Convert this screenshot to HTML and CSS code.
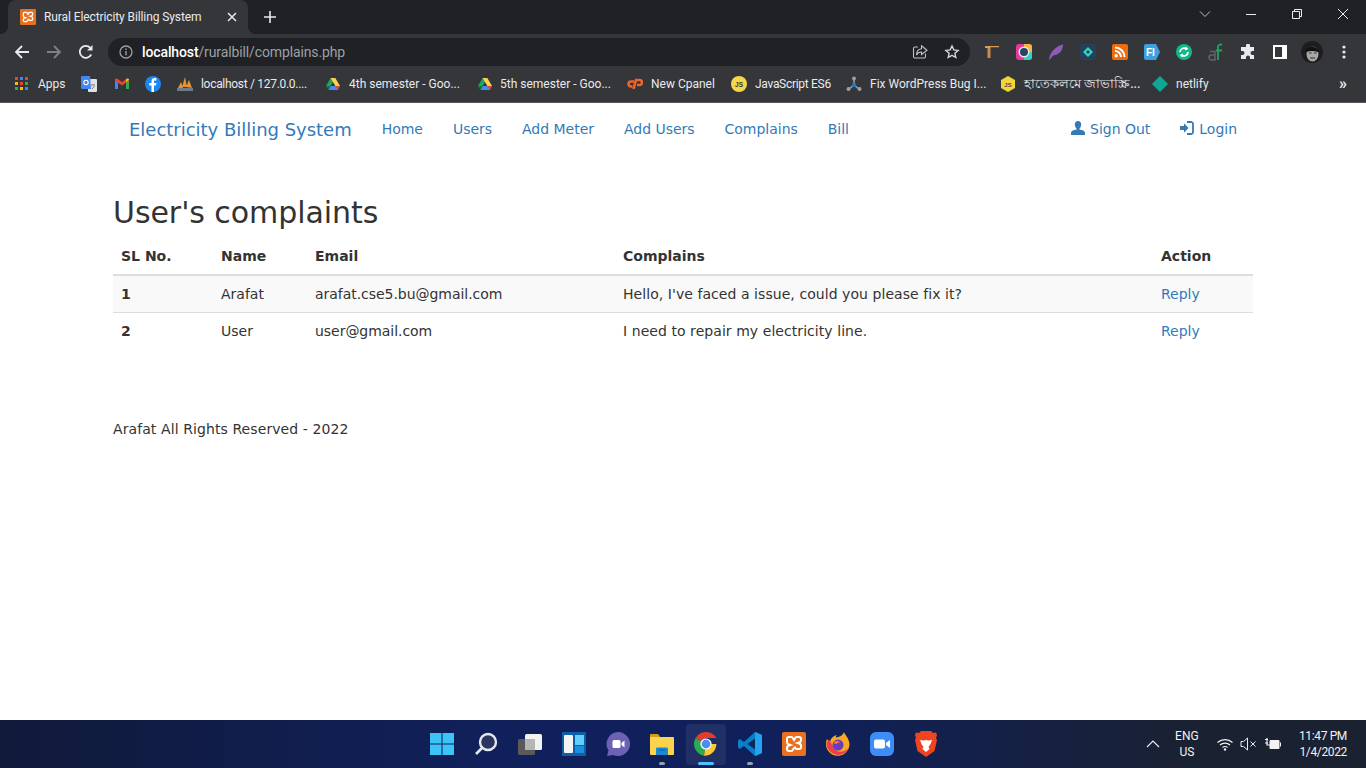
FILE: index.html
```html
<!DOCTYPE html>
<html lang="en">
<head>
  <meta charset="UTF-8" />
  <title>Rural Electricity Billing System</title>
  <link rel="stylesheet" href="styles.css">
</head>
<body>
  <svg class="defs" width="0" height="0">
    <symbol id="xampp" viewBox="0 0 24 24">
      <rect width="24" height="24" rx="2" fill="#e8701f"/>
      <path d="M7 5h2.500q1 0 1.500 1.500L12 8l1-1.500q.5-1.500 1.500-1.500H17q2 0 2 2v1q0 2-2 2.500l-1.500.5 1.500.5q2 .5 2 2.500v1q0 2-2 2h-2.500q-1 0-1.500-1.500L12 16l-1 1.500q-.5 1.500-1.500 1.500H7q-2 0-2-2v-1q0-2 2-2.500l1.500-.5-1.500-.5q-2-.5-2-2.500V7q0-2 2-2z" fill="none" stroke="#fff" stroke-width="2"/>
    </symbol>
    <symbol id="drive" viewBox="0 0 24 24">
      <path d="M8.500 3h7l-7 12H1.500z" fill="#1fa463"/>
      <path d="M15.500 3l7 12h-7l-7-12z" fill="#ffd04b"/>
      <path d="M5 21l3.500-6h14L19 21z" fill="#4688f4"/>
      <path d="M1.500 15h7L5 21z" fill="#0f7b45"/>
      <path d="M15.500 15h7L19 21z" fill="#e8442e"/>
    </symbol>
  </svg>

  <header class="chrome">
    <div class="tabstrip">
      <div class="tab">
        <svg class="fav" width="16" height="16"><use href="#xampp"/></svg>
        <span class="tab-title">Rural Electricity Billing System</span>
        <svg class="tab-close" width="10" height="10" viewBox="0 0 10 10"><path d="M1 1l8 8M9 1l-8 8" stroke="#e8eaed" stroke-width="1.500"/></svg>
      </div>
      <svg class="tab-new" width="14" height="14" viewBox="0 0 14 14"><path d="M7 1v12M1 7h12" stroke="#e8eaed" stroke-width="1.600"/></svg>
      <div class="winctl">
        <span><svg width="12" height="12" viewBox="0 0 12 12"><path d="M1 3.500l5 5 5-5" fill="none" stroke="#bdbfc3"/></svg></span>
        <span><svg width="10" height="10" viewBox="0 0 10 10"><path d="M0 5.500h10" stroke="#e8eaed"/></svg></span>
        <span><svg width="12" height="12" viewBox="0 0 12 12"><path d="M1.500 3.500h7v7h-7zM3.500 3.500v-2h7v7h-2" fill="none" stroke="#e8eaed"/></svg></span>
        <span><svg width="12" height="12" viewBox="0 0 12 12"><path d="M1 1l10 10M11 1L1 11" stroke="#e8eaed"/></svg></span>
      </div>
    </div>

    <div class="toolbar">
      <button class="tb"><svg width="16" height="16" viewBox="0 0 16 16"><path d="M15 8H2M8 2L2 8l6 6" fill="none" stroke="#e8eaed" stroke-width="1.800"/></svg></button>
      <button class="tb"><svg width="16" height="16" viewBox="0 0 16 16"><path d="M1 8h13M8 2l6 6-6 6" fill="none" stroke="#7d8084" stroke-width="1.800"/></svg></button>
      <button class="tb"><svg width="16" height="16" viewBox="0 0 16 16"><path d="M13.200 10.500A6 6 0 1 1 12.300 3.800" fill="none" stroke="#e8eaed" stroke-width="1.800"/><path d="M14.500 1v5.500H9z" fill="#e8eaed"/></svg></button>
      <div class="omnibox">
        <svg width="14" height="14" viewBox="0 0 14 14"><circle cx="7" cy="7" r="6" fill="none" stroke="#9aa0a6" stroke-width="1.300"/><path d="M7 6v4.200M7 3.500v1.400" stroke="#9aa0a6" stroke-width="1.400"/></svg>
        <span class="url"><b>localhost</b>/ruralbill/complains.php</span>
        <svg class="omni-share" width="16" height="16" viewBox="0 0 16 16"><path d="M13.500 9.500v3a1.500 1.500 0 0 1-1.500 1.500H3a1.500 1.500 0 0 1-1.500-1.500v-8A1.500 1.500 0 0 1 3 3h3" fill="none" stroke="#bdc1c6" stroke-width="1.100"/><path d="M9.500 1.800L15 6.200l-5.500 4.300V8C7 8 5.500 9 4.500 11c0-3.500 2-6 5-6.300z" fill="none" stroke="#bdc1c6" stroke-width="1.100"/></svg>
        <svg width="16" height="16" viewBox="0 0 16 16"><path d="M8 2l1.800 3.900 4.300.5-3.200 2.900.9 4.200L8 11.400l-3.800 2.100.9-4.200-3.200-2.900 4.300-.5z" fill="none" stroke="#d5d7da" stroke-width="1.400"/></svg>
      </div>
      <div class="exts">
        <span><svg width="16" height="16" viewBox="0 0 16 16"><path d="M1 2h3v2H1zM4 2h11v1.200H6.500V4H4z" fill="#d99a5b"/><path d="M3.500 4h3v10h-3z" fill="#c98a4e"/></svg></span>
        <span><svg width="16" height="16" viewBox="0 0 16 16"><rect width="16" height="16" rx="3" fill="#e6399b"/><path d="M8 0h5a3 3 0 0 1 3 3v5H8z" fill="#f6b73c"/><path d="M8 16h5a3 3 0 0 0 3-3V8H8z" fill="#2bd4c0"/><circle cx="8" cy="8" r="5.500" fill="#e8eaed"/><circle cx="8" cy="8" r="4" fill="#2b4560"/></svg></span>
        <span><svg width="16" height="16" viewBox="0 0 16 16"><path d="M1 15.500C2 8 8 2 15 .5c0 5-3 10.500-10 11l-3 4z" fill="#8d5cb8"/></svg></span>
        <span><svg width="16" height="16" viewBox="0 0 16 16"><rect width="16" height="16" rx="2" fill="#24405a"/><path d="M8 3l5 5-5 5-5-5zM8 6L6 8l2 2 2-2z" fill="#2fd8c4" fill-rule="evenodd"/></svg></span>
        <span><svg width="16" height="16" viewBox="0 0 16 16"><rect width="16" height="16" rx="2" fill="#ee6c0d"/><circle cx="4.200" cy="11.800" r="1.700" fill="#fff"/><path d="M3 7a6 6 0 0 1 6 6M3 3.500A9.500 9.500 0 0 1 12.500 13" fill="none" stroke="#fff" stroke-width="2"/></svg></span>
        <span><svg width="16" height="16" viewBox="0 0 16 16"><path d="M0 2a2 2 0 0 1 2-2h10l4 8-4 8H2a2 2 0 0 1-2-2z" fill="#3f9fe0"/><text x="2" y="12" font-size="10" font-weight="700" font-family="Liberation Sans" fill="#fff">FI</text></svg></span>
        <span><svg width="16" height="16" viewBox="0 0 16 16"><circle cx="8" cy="8" r="8" fill="#12b886"/><path d="M4 8a4 4 0 0 1 6.500-3M12 8a4 4 0 0 1-6.500 3" fill="none" stroke="#fff" stroke-width="1.800"/><path d="M9.500 2.500l3 2.500-3.500 1.500zM6.500 13.500l-3-2.500 3.500-1.500z" fill="#fff"/></svg></span>
        <span><svg width="16" height="18" viewBox="0 0 16 18"><path d="M7 17H3.500a2.500 2.500 0 0 1 0-5H7v5zM2 8.500h5V17" fill="none" stroke="#5f6368" stroke-width="1.500"/><path d="M10 17V4a2.500 2.500 0 0 1 4-2M8 7.500h6" fill="none" stroke="#1fa463" stroke-width="1.800"/></svg></span>
        <span><svg width="16" height="16" viewBox="0 0 16 16"><path d="M6 1.500a2 2 0 0 1 4 0V3h4v4h-1.500a2 2 0 0 0 0 4H14v4H10v-1.500a2 2 0 0 0-4 0V15H1v-4h1.500a2 2 0 0 0 0-4H1V3h5z" fill="#e8eaed"/></svg></span>
        <span><svg width="14" height="14" viewBox="0 0 14 14"><path d="M0 0h14v14H0zM9 2H2v10h7z" fill="#fff" fill-rule="evenodd"/></svg></span>
        <span class="avatar"><svg width="22" height="22" viewBox="0 0 22 22"><circle cx="11" cy="11" r="11" fill="#1d1d1d"/><ellipse cx="11.500" cy="13" rx="6" ry="7.500" fill="#a8a8a8"/><path d="M4 10q7-9 14 0l-1 1q-6-2-12 0z" fill="#111"/><path d="M8 12h2.500M13 12h2.500M9 17h5" stroke="#333" stroke-width="1"/></svg></span>
        <span><svg width="4" height="14" viewBox="0 0 4 14"><circle cx="2" cy="2" r="1.600" fill="#e8eaed"/><circle cx="2" cy="7" r="1.600" fill="#e8eaed"/><circle cx="2" cy="12" r="1.600" fill="#e8eaed"/></svg></span>
      </div>
    </div>

    <div class="bookmarks">
      <a class="bm"><svg width="13" height="14" viewBox="0 0 13 14"><path d="M0 0h3v3H0z" fill="#ea4335"/><path d="M5 0h3v3H5z" fill="#4285f4"/><path d="M10 0h3v3h-3z" fill="#ea4335"/><path d="M0 5h3v3H0z" fill="#fbbc04"/><path d="M5 5h3v3H5z" fill="#ea4335"/><path d="M10 5h3v3h-3z" fill="#34a853"/><path d="M0 10h3v3H0z" fill="#34a853"/><path d="M5 10h3v3H5z" fill="#fbbc04"/><path d="M10 10h3v3h-3z" fill="#4285f4"/></svg><span class="apps">Apps</span></a>
      <a class="bm"><svg width="16" height="16" viewBox="0 0 16 16"><rect x="7" y="3" width="9" height="13" rx="1" fill="#dfe1e5"/><path d="M1 0h8l1 13H1a1 1 0 0 1-1-1V1a1 1 0 0 1 1-1z" fill="#4285f4"/><circle cx="5" cy="6.500" r="2.200" fill="none" stroke="#fff" stroke-width="1.100"/><path d="M10 9h4M12 8v1M11 13l2.500-3" stroke="#777" stroke-width=".9"/></svg></a>
      <a class="bm"><svg width="16" height="16" viewBox="0 0 16 16"><path d="M1 13V4l3 2.300V13z" fill="#4285f4"/><path d="M15 13V4l-3 2.300V13z" fill="#34a853"/><path d="M1 4.500L8 9.500l7-5V3l-2-.5L8 6 3 2.500 1 3z" fill="#ea4335"/><path d="M12 6.300L15 4V3l-2-.5-1 .8z" fill="#fbbc04"/></svg></a>
      <a class="bm"><svg width="16" height="16" viewBox="0 0 16 16"><circle cx="8" cy="8" r="8" fill="#1b87f0"/><path d="M9 16V9.500h2l.4-2.400H9V5.600c0-.8.3-1.200 1.200-1.200h1.200V2.300C11 2.200 10.300 2.100 9.700 2.100 7.700 2.100 6.500 3.300 6.500 5.300v1.800H4.300v2.400h2.200V16z" fill="#fff"/></svg></a>
      <a class="bm"><svg width="16" height="16" viewBox="0 0 16 16"><path d="M1 12L4 6l2 6zM5 11l3-10 2 10zM9 11l3-7 3 8z" fill="#e8922b"/><path d="M0 12h16v3H0z" fill="#6d7a90"/></svg><span class="tight">localhost / 127.0.0....</span></a>
      <a class="bm"><svg width="16" height="16"><use href="#drive"/></svg><span>4th semester - Goo...</span></a>
      <a class="bm bm-near"><svg width="16" height="16"><use href="#drive"/></svg><span>5th semester - Goo...</span></a>
      <a class="bm"><svg width="16" height="16" viewBox="0 0 16 16"><path d="M7 5.500H4a2.500 2.500 0 0 0 0 5h1.500" fill="none" stroke="#f0642a" stroke-width="2.600"/><path d="M6.500 13L9 4h3.500a2.500 2.500 0 0 1 0 5H10" fill="none" stroke="#f0642a" stroke-width="2.600"/></svg><span>New Cpanel</span></a>
      <a class="bm"><svg width="16" height="16" viewBox="0 0 16 16"><circle cx="8" cy="8" r="8" fill="#f5d84a"/><text x="8" y="10.500" text-anchor="middle" font-size="6.500" font-weight="700" font-family="Liberation Sans" fill="#333">JS</text></svg><span class="tight">JavaScript ES6</span></a>
      <a class="bm"><svg width="16" height="16" viewBox="0 0 16 16"><path d="M8 3v7M8 9l-5 4M8 9l5 4" stroke="#9aa0a6" stroke-width="1.500"/><circle cx="8" cy="2.500" r="2" fill="#9aa0a6"/><circle cx="2.500" cy="13" r="2" fill="#9aa0a6"/><circle cx="13.500" cy="13" r="2" fill="#9aa0a6"/><circle cx="8" cy="9" r="2.200" fill="#1e78c2"/></svg><span>Fix WordPress Bug I...</span></a>
      <a class="bm"><svg width="16" height="16" viewBox="0 0 16 16"><path d="M8 0l7 4v8l-7 4-7-4V4z" fill="#f0d63c"/><text x="8" y="10.500" text-anchor="middle" font-size="6" font-weight="700" font-family="Liberation Sans" fill="#444">JS</text></svg><span class="bangla">হাতেকলমে জাভাস্ক্রি...</span></a>
      <a class="bm"><svg width="16" height="16" viewBox="0 0 16 16"><path d="M8 0l8 8-8 8-8-8z" fill="#0ea895"/></svg><span>netlify</span></a>
      <a class="bm-more">»</a>
    </div>
  </header>

  <main class="page">
    <nav class="navbar">
      <a class="brand">Electricity Billing System</a>
      <ul class="nav">
        <li>Home</li>
        <li>Users</li>
        <li>Add Meter</li>
        <li>Add Users</li>
        <li>Complains</li>
        <li>Bill</li>
      </ul>
      <ul class="nav nav-right">
        <li><svg width="14" height="14" viewBox="0 0 14 14"><path d="M7 0c2 0 3.200 1.400 3.200 3.400 0 1.700-.8 3.200-1.700 4v1.200c2.500.5 5.500 1.300 5.500 3.400v2H0v-2c0-2.100 3-2.900 5.500-3.400V7.400c-.9-.8-1.700-2.300-1.700-4C3.800 1.400 5 0 7 0z" fill="#337ab7"/></svg> Sign Out</li>
        <li><svg width="14" height="14" viewBox="0 0 14 14"><path d="M0 5h4V2.200L8.500 7 4 11.800V9H0z" fill="#337ab7"/><path d="M7 1h4.500A2 2 0 0 1 13 3v8a2 2 0 0 1-1.500 2H7" fill="none" stroke="#337ab7" stroke-width="1.800"/></svg> Login</li>
      </ul>
    </nav>

    <h2>User's complaints</h2>
    <table class="tabela">
      <thead>
        <tr>
          <th>SL No.</th>
          <th>Name</th>
          <th>Email</th>
          <th>Complains</th>
          <th>Action</th>
        </tr>
      </thead>
      <tbody>
        <tr>
          <td><b>1</b></td>
          <td>Arafat</td>
          <td>arafat.cse5.bu@gmail.com</td>
          <td>Hello, I've faced a issue, could you please fix it?</td>
          <td><a>Reply</a></td>
        </tr>
        <tr>
          <td><b>2</b></td>
          <td>User</td>
          <td>user@gmail.com</td>
          <td>I need to repair my electricity line.</td>
          <td><a>Reply</a></td>
        </tr>
      </tbody>
    </table>
    <footer class="rodape">Arafat All Rights Reserved - 2022</footer>
  </main>

  <div class="taskbar">
    <div></div>
    <div class="apps-row">
      <span><svg width="24" height="24" viewBox="0 0 24 24"><path d="M0 1h11.500v10.500H0zM12.500 1H24v10.500H12.500zM0 12.500h11.500V23H0zM12.500 12.500H24V23H12.500z" fill="#3cc4f7"/></svg></span>
      <span><svg width="24" height="24" viewBox="0 0 24 24"><circle cx="14" cy="10" r="8" fill="#2b3560" stroke="#e6e8ee" stroke-width="2.400"/><path d="M8 16l-6 6" stroke="#e6e8ee" stroke-width="2.600"/></svg></span>
      <span><svg width="24" height="24" viewBox="0 0 24 24"><rect x="7" y="2" width="17" height="16" rx="1.500" fill="#f2f2f2"/><rect y="7" width="17" height="16" rx="1.500" fill="#5a5a5a"/><rect x="7" y="7" width="10" height="11" fill="#b5b5b5"/></svg></span>
      <span><svg width="24" height="24" viewBox="0 0 24 24"><rect width="24" height="24" rx="1" fill="#0f5ea8"/><rect x="2" y="3" width="9" height="18" rx="1" fill="#f4f4f4"/><rect x="13" y="3" width="9" height="10" fill="#5ed0fb"/><rect x="13" y="14" width="9" height="7" fill="#1a8fe0"/></svg></span>
      <span><svg width="24" height="24" viewBox="0 0 24 24"><path d="M12 0a12 12 0 1 1-5 22.900L1 24l1.500-5.500A12 12 0 0 1 12 0z" fill="#6b62b5"/><rect x="6.500" y="8" width="8" height="8" rx="1.500" fill="#fff"/><path d="M15.500 11l3-2.500v7l-3-2.500z" fill="#fff"/></svg></span>
      <span class="running"><svg width="24" height="24" viewBox="0 0 24 24"><path d="M0 3a1 1 0 0 1 1-1h7l2 2.500v3H0z" fill="#d99c12"/><path d="M0 5h23a1 1 0 0 1 1 1v16a1 1 0 0 1-1 1H1a1 1 0 0 1-1-1z" fill="#fcd34d"/><path d="M6 16.500a1 1 0 0 1 1-1h10a1 1 0 0 1 1 1V23H6z" fill="#1a8ad4"/><path d="M9 18h6" stroke="#0f5ea8" stroke-width="1.200"/></svg></span>
      <span class="running active"><svg width="24" height="24" viewBox="0 0 24 24"><path d="M12 12L1.600 6A12 12 0 0 1 22.400 6H12z" fill="#e33b2e"/><path d="M12 12L1.600 6A12 12 0 0 0 10 23.800z" fill="#2da94f"/><path d="M12 12h10.400A12 12 0 0 1 10 23.800z" fill="#fcc934"/><circle cx="12" cy="12" r="5.600" fill="#fff"/><circle cx="12" cy="12" r="4.400" fill="#4a8ef0"/></svg></span>
      <span class="running"><svg width="24" height="24" viewBox="0 0 24 24"><path d="M17 0l7 3v18l-7 3-11-10-4 3-2-1.500V8.500L2 7l4 3z" fill="#0a7fc9"/><path d="M17 0l7 3v18l-7 3z" fill="#22a5ee"/><path d="M17 6.500L9.500 12l7.500 5.500z" fill="#0d2a5e"/></svg></span>
      <span><svg width="24" height="24"><use href="#xampp"/></svg></span>
      <span><svg width="24" height="24" viewBox="0 0 24 24"><path d="M18 0c1 3 5 6 5.500 12A11.800 11.800 0 1 1 1 7c1 1.500 2 2 3 2.500C5 6 7.500 3.500 11 3c-1 1-1.500 2-1 2.500 3-.5 7-2 8-5.500z" fill="#f9a825"/><path d="M.5 12A11.800 11.800 0 0 0 23 16c-4 3.500-9 5-13 2.500C6 16 6 10 3 8 1.500 9 .5 10 .5 12z" fill="#ee3d4f"/><circle cx="12" cy="13" r="5.500" fill="#6b3bbf"/><path d="M8 10c2-1.500 5-1 6 .5-2 0-3 .5-3 1.500l-3-.5z" fill="#f57c2a"/></svg></span>
      <span><svg width="24" height="24" viewBox="0 0 24 24"><rect width="24" height="24" rx="6" fill="#3d8cf7"/><rect x="4" y="7.500" width="11" height="9" rx="2" fill="#fff"/><path d="M16 11l4-3v8l-4-3z" fill="#fff"/></svg></span>
      <span><svg width="22" height="26" viewBox="0 0 22 26"><path d="M6 0h10l2 2 3-.5L22 4l-1 3 1 2-2.500 11L11 26l-8.500-6L0 9l1-2-1-3 1-2.500L4 2z" fill="#f0431f"/><path d="M5 9l4 .5L11 9l2 .5 4-.5-1.500 4-2 3 1 2L11 21l-3.500-3 1-2-2-3z" fill="#fff"/></svg></span>
    </div>
    <div class="tray">
      <svg class="tray-up" width="14" height="8" viewBox="0 0 14 8"><path d="M1 7l6-6 6 6" fill="none" stroke="#e8eaed" stroke-width="1.200"/></svg>
      <div class="lang">ENG<br>US</div>
      <svg class="tray-wifi" width="16" height="13" viewBox="0 0 16 13"><path d="M.5 4.500a11 11 0 0 1 15 0M3 7a7.500 7.500 0 0 1 10 0M5.500 9.500a4 4 0 0 1 5 0" fill="none" stroke="#f2f2f2" stroke-width="1.200"/><circle cx="8" cy="11.500" r="1.200" fill="#f2f2f2"/></svg>
      <svg class="tray-vol" width="16" height="14" viewBox="0 0 16 14"><path d="M1 4.500h2.500L7.500 1v12l-4-3.500H1z" fill="none" stroke="#e8eaed"/><path d="M10.500 4.500l5 5M15.500 4.500l-5 5" stroke="#e8eaed"/></svg>
      <svg class="tray-bat" width="16" height="12" viewBox="0 0 16 12"><path d="M0 1.500h3M0 5h3M2 0v7h3" fill="none" stroke="#f2f2f2" stroke-width="1.200"/><rect x="4.500" y="2" width="10" height="9" rx="1" fill="#f2f2f2"/><path d="M15 4.500h1v4h-1z" fill="#f2f2f2"/></svg>
      <div class="clock">11:47 PM<br>1/4/2022</div>
    </div>
  </div>
</body>
</html>
```

FILE: styles.css
```css
* {
  box-sizing: border-box;
}

body {
  margin: 0;
  height: 100vh;
  display: flex;
  flex-direction: column;
  overflow: hidden;
  background: #fff;
  font-family: 'DejaVu Sans', sans-serif;
  font-size: 14px;
  line-height: 20px;
  color: #333;
}

.defs {
  position: absolute;
}

svg {
  display: block;
  flex: none;
}

/* browser frame */
.chrome {
  background: #35363a;
  font-family: Roboto, 'Noto Sans', sans-serif;
  color: #e8eaed;
  font-size: 12px;
}

.tabstrip {
  height: 34px;
  background: #202124;
  display: flex;
  align-items: center;
}

.tab {
  position: relative;
  width: 240px;
  height: 34px;
  margin-left: 8px;
  padding: 0 11px 0 12px;
  background: #35363a;
  border-radius: 8px 8px 0 0;
  display: flex;
  align-items: center;
}

.tab::before,
.tab::after {
  content: "";
  position: absolute;
  bottom: 0;
  width: 8px;
  height: 8px;
}

.tab::before {
  left: -8px;
  background: radial-gradient(circle at 0 0, #202124 8px, #35363a 8.5px);
}

.tab::after {
  right: -8px;
  background: radial-gradient(circle at 100% 0, #202124 8px, #35363a 8.5px);
}

.tab-title {
  margin-left: 8px;
  flex: 1;
  white-space: nowrap;
  letter-spacing: -0.1px;
}

.tab-new {
  margin-left: 15px;
}

.winctl {
  margin-left: auto;
  display: flex;
  align-self: flex-start;
}

.winctl span {
  width: 46px;
  height: 28px;
  display: flex;
  align-items: center;
  justify-content: center;
}

.toolbar {
  height: 32px;
  padding-top: 4px;
  display: flex;
  align-items: stretch;
}

.tb {
  width: 32px;
  padding: 0;
  background: none;
  border: 0;
  display: flex;
  align-items: center;
  justify-content: center;
}

.tb:first-child {
  margin-left: 6px;
}

.omnibox {
  width: 862px;
  margin-left: 6px;
  padding: 0 10px 0 11px;
  background: #202124;
  border-radius: 14px;
  display: flex;
  align-items: center;
}

.url {
  margin-left: 9px;
  flex: 1;
  font-size: 14px;
  letter-spacing: -0.12px;
  color: #9aa0a6;
}

.url b {
  font-weight: 500;
  color: #fff;
}

.omni-share {
  margin-right: 16px;
}

.exts {
  margin-left: 6px;
  display: flex;
}

.exts span {
  width: 32px;
  display: flex;
  align-items: center;
  justify-content: center;
}

.bookmarks {
  height: 37px;
  padding: 0 0 1px 15px;
  border-bottom: 1px solid #55575b;
  display: grid;
  grid-template-columns: 66px 33px 31px 32px 148px 152px 150px 104px 115px 154px 152px auto 1fr;
  align-items: center;
}

.bm {
  display: flex;
  align-items: center;
  gap: 8px;
  white-space: nowrap;
  color: #e8eaed;
}

.bm-near {
  gap: 7px;
}

.bm span.apps {
  margin-left: 2px;
}

.bm .tight {
  letter-spacing: -0.3px;
}

.bm .bangla {
  font-size: 12.5px;
  font-family: 'Noto Sans', Roboto, sans-serif;
}

.bm-more {
  justify-self: end;
  margin-right: 19px;
  font-size: 16px;
  font-weight: 700;
  color: #e8eaed;
}

/* page */
.page {
  flex: 1;
  padding: 0 113px;
}

a {
  color: #337ab7;
}

.navbar {
  height: 51px;
  margin-bottom: 20px;
  display: flex;
  align-items: center;
  color: #337ab7;
}

.brand {
  padding: 2px 15px 0 16px;
  font-size: 18px;
  letter-spacing: -0.02px;
}

.nav {
  list-style: none;
  margin: 0;
  padding: 0;
  display: flex;
  letter-spacing: -0.02px;
}

.nav li {
  padding: 0 15px;
  display: flex;
  align-items: center;
  gap: 5px;
}

.nav li svg {
  margin-top: -2px;
}

.nav-right {
  margin-left: auto;
  padding-right: 1px;
}

h2 {
  margin: 42px 0 9px;
  font-size: 30px;
  font-weight: 500;
  line-height: 33px;
  letter-spacing: -0.06px;
}

.tabela {
  width: 100%;
  border-collapse: collapse;
  table-layout: fixed;
  margin-bottom: 20px;
}

.tabela th {
  padding: 8px;
  text-align: left;
  border-bottom: 2px solid #ddd;
}

.tabela td {
  padding: 8px;
  border-top: 1px solid #ddd;
}

.tabela tbody tr:first-child td {
  border-top: 0;
}

.tabela tbody tr:first-child {
  background: #f9f9f9;
}

.tabela td:nth-child(3) {
  letter-spacing: -0.04px;
}

.tabela td:nth-child(4) {
  letter-spacing: 0.06px;
}

.tabela th:nth-child(1) { width: 100px; }
.tabela th:nth-child(2) { width: 94px; }
.tabela th:nth-child(3) { width: 308px; }
.tabela th:nth-child(5) { width: 100px; }

.rodape {
  margin-top: 70px;
  letter-spacing: 0.09px;
}

/* windows taskbar */
.taskbar {
  height: 48px;
  flex: none;
  background: linear-gradient(90deg, #111a3a 0%, #10205a 35%, #10205a 60%, #1a2130 88%);
  display: grid;
  grid-template-columns: 1fr auto 1fr;
  align-items: center;
  font-family: Roboto, 'Noto Sans', sans-serif;
  font-size: 12px;
  line-height: 16px;
  color: #f2f2f2;
}

.apps-row {
  display: flex;
  gap: 4px;
  padding-left: 2px;
}

.apps-row span {
  position: relative;
  width: 40px;
  height: 41px;
  border-radius: 4px;
  display: flex;
  align-items: center;
  justify-content: center;
}

.apps-row .active {
  background: rgba(255,255,255,0.07);
}

.running::after {
  content: "";
  position: absolute;
  bottom: 0;
  left: 17px;
  width: 6px;
  height: 3px;
  border-radius: 2px;
  background: #9aa0ad;
}

.apps-row .active::after {
  left: 12px;
  width: 16px;
  background: #4cc2ff;
}

.tray {
  display: flex;
  align-items: center;
  justify-content: flex-end;
  padding-right: 19px;
}

.lang {
  margin-left: 10px;
  width: 34px;
  text-align: center;
}

.tray-wifi {
  margin-left: 13px;
}

.tray-vol {
  margin-left: 7px;
}

.tray-bat {
  margin-left: 9px;
}

.clock {
  margin-left: 18px;
  text-align: right;
  letter-spacing: -0.35px;
}
```
